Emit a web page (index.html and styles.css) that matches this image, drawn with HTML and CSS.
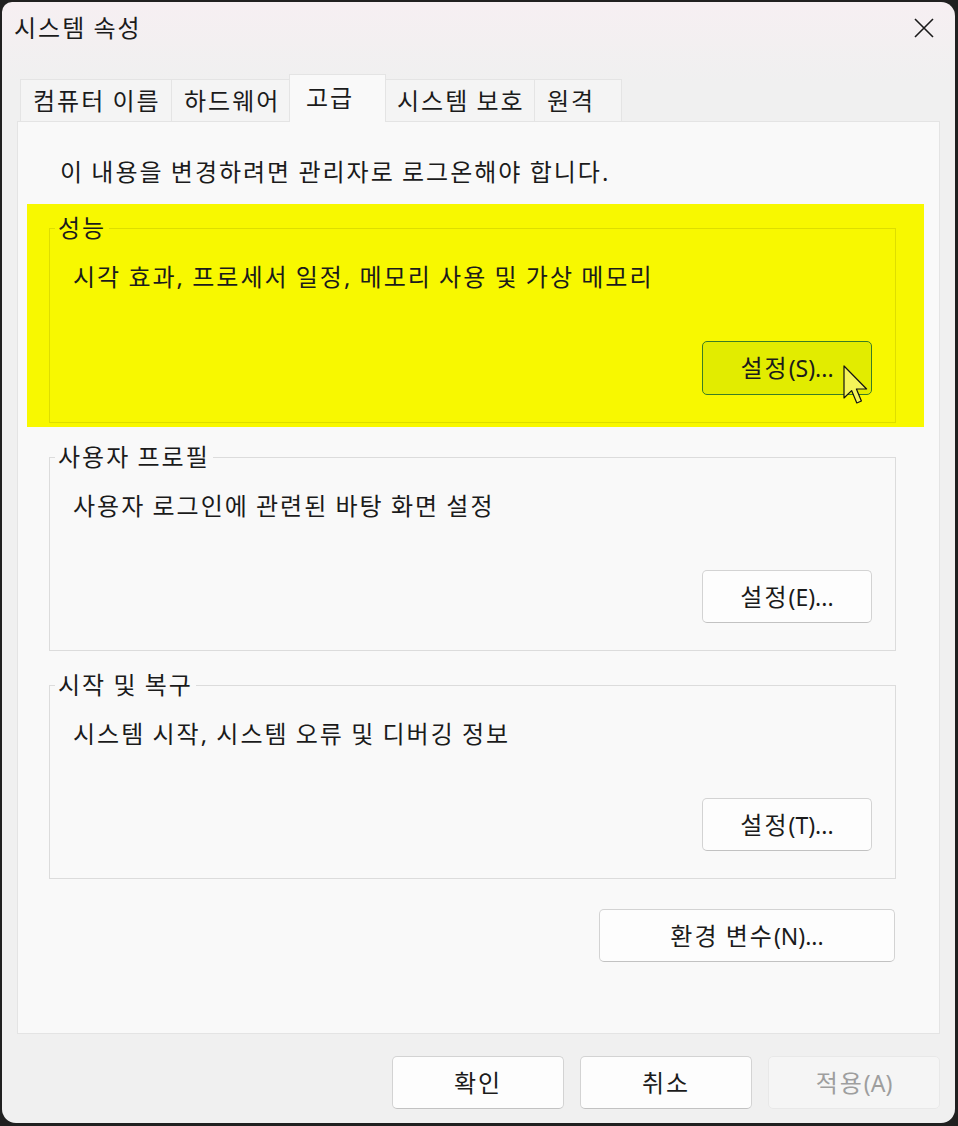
FILE: index.html
```html
<!DOCTYPE html>
<html lang="ko">
<head>
<meta charset="utf-8">
<title>시스템 속성</title>
<link rel="stylesheet" href="styles.css">
</head>
<body>
<div class="window">
  <div class="titlebar">
    <span class="title">시스템 속성</span>
    <svg class="close" width="20" height="20" viewBox="0 0 20 20"><path d="M1 1 L19 19 M19 1 L1 19" stroke="#1a1a1a" stroke-width="1.6" fill="none"/></svg>
  </div>
  <div class="tabs">
    <div class="tab t1">컴퓨터 이름</div>
    <div class="tab t2">하드웨어</div>
    <div class="tab t3 active">고급</div>
    <div class="tab t4">시스템 보호</div>
    <div class="tab t5">원격</div>
  </div>
  <div class="panel">
    <p class="notice">이 내용을 변경하려면 관리자로 로그온해야 합니다.</p>
    <div class="highlight">
      <fieldset class="group group-hl">
        <legend>성능</legend>
        <div class="group-body">
          <p class="desc">시각 효과, 프로세서 일정, 메모리 사용 및 가상 메모리</p>
          <div class="btn-row">
            <div class="btn btn-hl">설정<span class="lat">(S)...</span>
              <svg class="cursor" width="26" height="40" viewBox="0 0 13 20"><path d="M0.5 0.5 L0.5 16.5 L4.3 12.8 L6.9 19 L9.2 18 L6.7 12 L11.8 12 Z" fill="#f4f45a" stroke="#111" stroke-width="0.6" stroke-linejoin="round"/></svg>
            </div>
          </div>
        </div>
      </fieldset>
    </div>
    <fieldset class="group">
      <legend>사용자 프로필</legend>
      <div class="group-body">
        <p class="desc">사용자 로그인에 관련된 바탕 화면 설정</p>
        <div class="btn-row"><div class="btn">설정<span class="lat">(E)...</span></div></div>
      </div>
    </fieldset>
    <fieldset class="group">
      <legend>시작 및 복구</legend>
      <div class="group-body">
        <p class="desc">시스템 시작, 시스템 오류 및 디버깅 정보</p>
        <div class="btn-row"><div class="btn">설정<span class="lat">(T)...</span></div></div>
      </div>
    </fieldset>
    <div class="env-row"><div class="btn btn-env">환경 변수<span class="lat">(N)...</span></div></div>
  </div>
  <div class="footer">
    <div class="btn btn-foot">확인</div>
    <div class="btn btn-foot">취소</div>
    <div class="btn btn-foot disabled">적용<span class="lat">(A)</span></div>
  </div>
</div>
</body>
</html>
```
FILE: styles.css
```css
* { box-sizing: border-box; }
html, body { margin: 0; padding: 0; }
body {
  background: #202020;
  width: 958px;
  height: 1126px;
  overflow: hidden;
  font-family: "Noto Sans", "Noto Sans CJK KR", sans-serif;
  font-size: 24px;
  color: #1b1b1b;
  letter-spacing: 2px;
  word-spacing: -1px;
}
.lat {
  letter-spacing: 0;
  font-size: 23px;
}
.window {
  margin: 2px 3px 0 2px;
  height: 1121px;
  border-radius: 10px 14px 14px 14px;
  background: linear-gradient(#f6eff2 0, #f0f0f0 80px, #f0f0f0 100%);
  overflow: hidden;
}
.titlebar {
  height: 52px;
  display: flex;
  align-items: center;
  justify-content: space-between;
  padding-left: 12px;
  padding-right: 21px;
}
.title { line-height: 32px; }
.close { display: block; }
.tabs {
  display: flex;
  align-items: flex-end;
  margin: 20px 15px 0 15px;
  padding-left: 3px;
  height: 47px;
}
.tab {
  height: 42px;
  line-height: 32px;
  display: flex;
  align-items: center;
  padding-left: 12px;
  background: #f4f4f4;
  border: 1px solid #e4e4e4;
  border-bottom: none;
  margin-right: -1px;
  white-space: nowrap;
}
.t1 { width: 152px; }
.t2 { width: 119px; }
.t3 { width: 97px; padding-left: 16px; }
.t4 { width: 150px; padding-left: 11px; }
.t5 { width: 88px; }
.tab.active {
  height: 48px;
  margin-bottom: -1px;
  background: #f9f9f9;
  position: relative;
  z-index: 1;
  padding-bottom: 1px;
}
.panel {
  margin: 0 15px;
  background: #f9f9f9;
  border: 1px solid #e4e4e4;
  padding: 34px 43px 71px 31px;
}
.notice {
  margin: 0;
  padding-left: 11px;
  line-height: 32px;
}
.highlight {
  background: #f8f800;
  margin: 16px -28px 14px -22px;
  padding: 8px 28px 4px 22px;
}
.group {
  margin: 0 0 18px 0;
  padding: 0;
  border: 1px solid #dcdcdc;
  min-width: 0;
}
.group-hl { margin-bottom: 0; border-color: #dede00; }
.group legend {
  margin-left: 5px;
  padding: 0 3px;
  line-height: 32px;
}
.group-body {
  padding: 17px 23px 27px 23px;
}
.desc {
  margin: 0;
  line-height: 32px;
}
.btn-row {
  display: flex;
  justify-content: flex-end;
  margin-top: 48px;
}
.btn {
  width: 170px;
  height: 53px;
  display: flex;
  align-items: center;
  justify-content: center;
  background: #fdfdfd;
  border: 1px solid #d3d3d3;
  border-bottom-color: #c2c2c2;
  border-radius: 5px;
  line-height: 32px;
  white-space: nowrap;
}
.btn-hl {
  position: relative;
  height: 54px;
  background: #e2ec00;
  border: 1px solid #3b7d24;
}
.cursor {
  position: absolute;
  left: 140px;
  top: 23px;
}
.env-row {
  display: flex;
  justify-content: flex-end;
  margin-top: 30px;
  padding-right: 1px;
}
.btn-env { width: 296px; }
.footer {
  display: flex;
  justify-content: flex-end;
  gap: 16px;
  margin: 22px 15px 0 0;
}
.btn-foot { width: 172px; }
.btn.disabled {
  background: #f5f5f5;
  border-color: #e8e8e8;
  color: #9e9e9e;
}
```
